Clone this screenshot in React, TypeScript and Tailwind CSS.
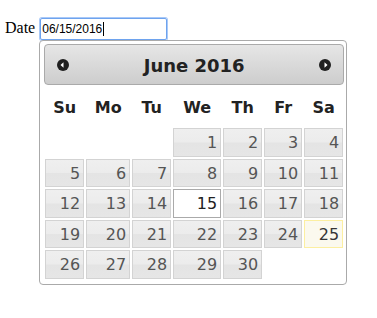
import React from 'react';

const COLS = 'grid grid-cols-[39px_44px_39px_48px_39px_38px_39px] gap-x-[2px] px-[1px]';
const DAY_NAMES = ['Su', 'Mo', 'Tu', 'We', 'Th', 'Fr', 'Sa'];

// June 2016 starts on a Wednesday
const CELLS: (number | null)[] = [
  null, null, null,
  ...Array.from({ length: 30 }, (_, i) => i + 1),
  null, null,
];

const SELECTED = 15;
const TODAY = 25;

function CircleArrow({ dir }: { dir: 'left' | 'right' }) {
  return (
    <svg width="12" height="12" viewBox="0 0 12 12" className="block">
      <circle cx="6" cy="6" r="6" fill="#1f1f1f" />
      {dir === 'left' ? (
        <polygon points="3.5,6 6.5,3.2 6.5,8.8" fill="#ffffff" />
      ) : (
        <polygon points="8.5,6 5.5,3.2 5.5,8.8" fill="#ffffff" />
      )}
    </svg>
  );
}

function DayCell({ day }: { day: number | null }) {
  if (day === null) return <div className="h-[28.5px]" />;

  let tone = 'border-[#d3d3d3] bg-[linear-gradient(#efefef_0%,#ececec_48%,#e4e4e4_52%,#e6e6e6_100%)] text-[#555555]';
  if (day === SELECTED) tone = 'border-[#aaaaaa] bg-white text-[#212121]';
  else if (day === TODAY) tone = 'border-[#fcefa1] bg-[#fbf9ee] text-[#363636]';

  return (
    <div className={`h-[28.5px] border pt-[4px] pr-[3px] text-right leading-[normal] ${tone}`}>
      {day}
    </div>
  );
}

export default function App() {
  return (
    <div className="min-h-[318px] bg-white pl-[5px] pt-[18px]">
      <div className="flex items-start">
        <span className="mt-[1px] text-[16px] leading-[normal] text-black [font-family:'Liberation_Serif',serif]">
          Date
        </span>

        <div className="relative ml-[5px]">
          {/* Focused text input */}
          <div className="flex h-[22px] w-[127px] items-center rounded-[2px] border border-[#6ea3ee] px-[1px] shadow-[0_0_0_1px_#a9c9f8] [font-family:'Liberation_Sans',Arial,sans-serif]">
            <span className="text-[12px] leading-[normal] text-black">06/15/2016</span>
            <span className="ml-[1px] h-[14px] w-px bg-black" />
          </div>

          {/* Datepicker popup */}
          <div className="absolute left-[-1px] top-[22px] w-[308px] rounded-[4px] border border-[#aaaaaa] bg-white pb-[4.5px] pl-[4px] pr-[2px] pt-[3px] [font-family:'DejaVu_Sans',Verdana,sans-serif]">
            <div className="flex h-[41px] w-[300px] items-center justify-between rounded-[4px] border border-[#aaaaaa] bg-[linear-gradient(#e6e6e6,#cdcdcd)] px-[12px]">
              <CircleArrow dir="left" />
              <span className="pt-[3px] text-[18px] font-bold leading-none text-[#222222]">June 2016</span>
              <CircleArrow dir="right" />
            </div>

            <div className={`${COLS} h-[42px] pt-[13px]`}>
              {DAY_NAMES.map((d) => (
                <div key={d} className="text-center text-[16px] font-bold leading-[normal] text-[#222222]">
                  {d}
                </div>
              ))}
            </div>

            <div className={`${COLS} gap-y-[2px] py-[1px] text-[16px]`}>
              {CELLS.map((day, i) => (
                <DayCell key={i} day={day} />
              ))}
            </div>
          </div>
        </div>
      </div>
    </div>
  );
}
